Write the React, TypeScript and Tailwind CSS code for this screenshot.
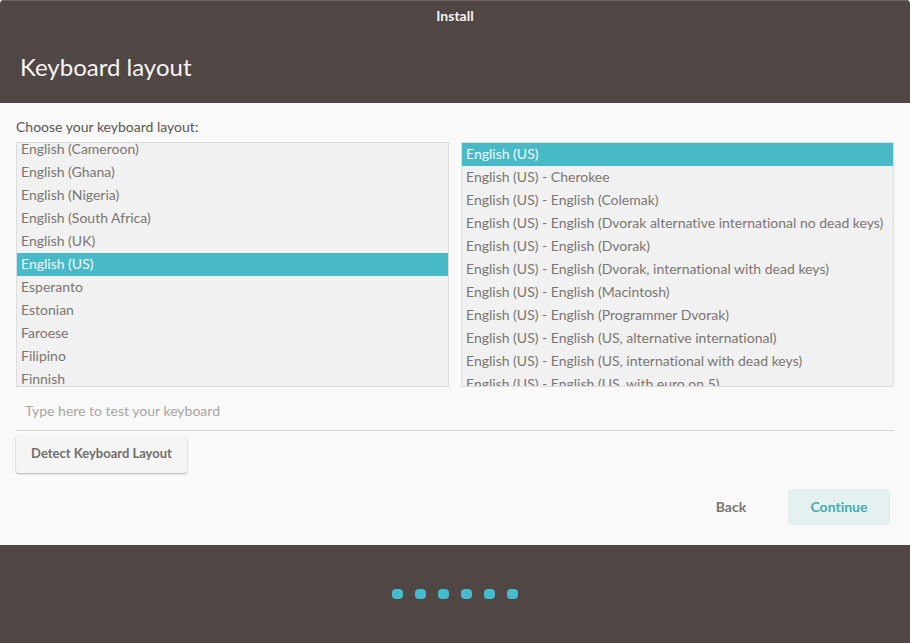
import { useEffect, useRef, useState } from "react";

const layouts = [
  "English (Cameroon)",
  "English (Ghana)",
  "English (Nigeria)",
  "English (South Africa)",
  "English (UK)",
  "English (US)",
  "Esperanto",
  "Estonian",
  "Faroese",
  "Filipino",
  "Finnish",
];

const variants = [
  "English (US)",
  "English (US) - Cherokee",
  "English (US) - English (Colemak)",
  "English (US) - English (Dvorak alternative international no dead keys)",
  "English (US) - English (Dvorak)",
  "English (US) - English (Dvorak, international with dead keys)",
  "English (US) - English (Macintosh)",
  "English (US) - English (Programmer Dvorak)",
  "English (US) - English (US, alternative international)",
  "English (US) - English (US, international with dead keys)",
  "English (US) - English (US, with euro on 5)",
];

type ListBoxProps = {
  label: string;
  items: string[];
  initialScroll?: number;
};

function ListBox({ label, items, initialScroll = 0 }: ListBoxProps) {
  const [selected, setSelected] = useState("English (US)");
  const ref = useRef<HTMLUListElement>(null);

  useEffect(() => {
    if (ref.current) ref.current.scrollTop = initialScroll;
  }, [initialScroll]);

  return (
    <ul
      ref={ref}
      role="listbox"
      aria-label={label}
      tabIndex={0}
      className="h-[245px] min-w-0 flex-1 overflow-x-hidden overflow-y-auto border border-[#dddddd] bg-[#f1f1f1] text-[#7b7672] outline-none [scrollbar-width:none]"
    >
      {items.map((item) => (
        <li
          key={item}
          role="option"
          aria-selected={item === selected}
          onClick={() => setSelected(item)}
          className="h-[23px] cursor-default px-1 leading-[22px] whitespace-nowrap aria-selected:bg-[#48b9c7] aria-selected:text-[#f4fafa]"
        >
          {item}
        </li>
      ))}
    </ul>
  );
}

export default function App() {
  return (
    <div className="bg-white">
      <div className="flex min-h-screen flex-col overflow-hidden rounded-t-[4px] bg-[#504643] font-['Lato',sans-serif] text-[14px] [font-variant-ligatures:none]">
        <header className="h-[103px] border-t border-[#6b6461] text-[#f5f4f3]">
          <div className="pt-1 text-center leading-[22px] font-bold">Install</div>
          <h1 className="px-5 pt-6 text-[24px] leading-8">Keyboard layout</h1>
        </header>

        <main className="flex flex-1 flex-col bg-[#f9f9f9] px-4 pt-3">
          <p className="h-[27px] leading-6 text-[#5b5653]">Choose your keyboard layout:</p>
          <div className="flex gap-3">
            <ListBox label="Keyboard layout" items={layouts} initialScroll={5} />
            <ListBox label="Keyboard variant" items={variants} />
          </div>
          <input
            type="text"
            aria-label="Type here to test your keyboard"
            placeholder="Type here to test your keyboard"
            className="h-11 border-b border-[#d8d8d8] bg-transparent pt-1 pr-2 pl-[9px] text-[#5b5653] outline-none placeholder:text-[#a9a6a4]"
          />
          <button
            type="button"
            className="mt-[5px] h-[37px] min-w-[171px] self-start rounded-[3px] bg-[#f5f5f5] px-3 pb-[2px] text-[13px] font-bold text-[#736e6b] shadow-[0_1px_2px_rgba(0,0,0,0.3)]"
          >
            Detect Keyboard Layout
          </button>
          <div className="mt-4 flex justify-end gap-[6px] pr-1 pb-5 font-bold">
            <button type="button" className="h-9 w-[102px] rounded-[3px] pb-[2px] text-[#7b7672]">
              Back
            </button>
            <button type="button" className="h-9 w-[102px] rounded-[3px] bg-[#e5f1f1] pb-[2px] text-[#45aab2]">
              Continue
            </button>
          </div>
        </main>

        <footer className="flex h-[98px] items-center justify-center gap-3">
          {[0, 1, 2, 3, 4, 5].map((step) => (
            <span key={step} className="h-[10px] w-[11px] rounded-[4px] bg-[#45bccd]" />
          ))}
        </footer>
      </div>
    </div>
  );
}
